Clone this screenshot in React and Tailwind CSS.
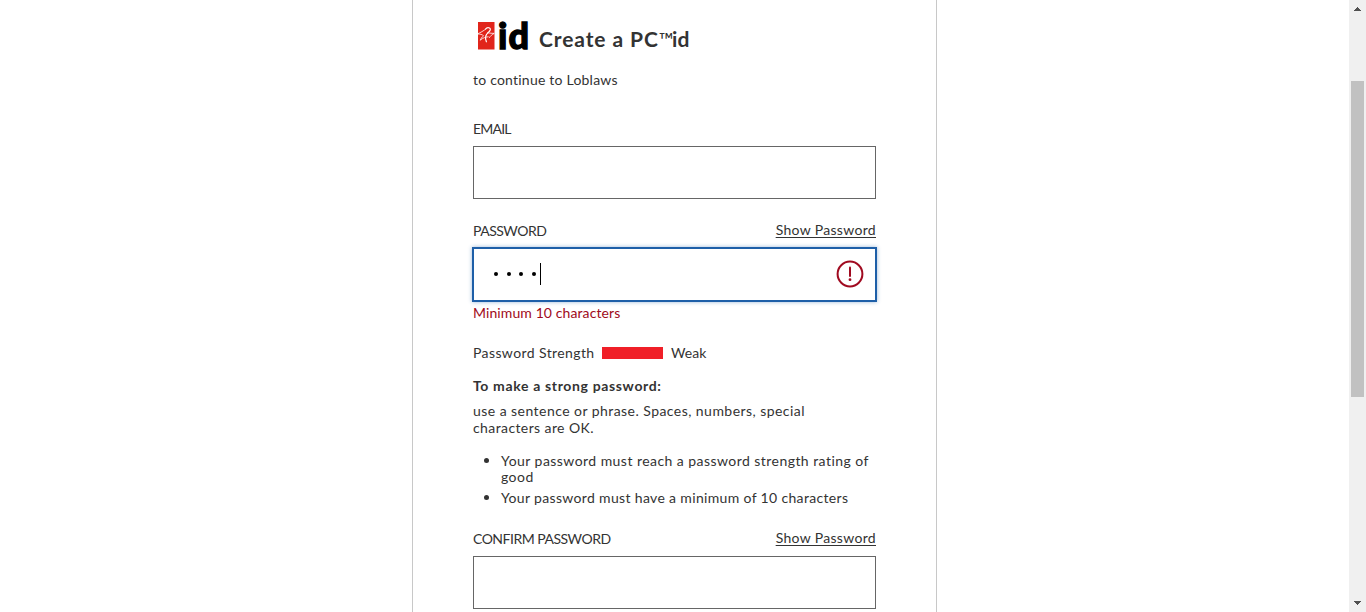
function Logo() {
  return (
    <div className="flex h-8 w-[53px] shrink-0 items-start">
      <svg className="mt-0.5 h-7 w-[19px] shrink-0" viewBox="0 0 19 28">
        <rect x="1" y="0" width="16.5" height="27.5" fill="#e1251b" />
        <path d="M8.7 7C10 5 14 5.4 13.2 8C12.5 10 9.6 11.2 8.8 14C8.3 16 8.7 18 9.4 19.8" fill="none" stroke="#fff" strokeWidth="1.2" strokeLinecap="round" />
        <path d="M9 6.8C6.5 9 3.5 10.5 0.3 12C3.5 12 5 12.4 6.5 13.8C4.8 15.2 3.8 16.8 3.2 18.2C6.5 15.6 8.5 15 11.2 14.8M10.6 10.8C13 11.2 15.3 11.4 17.2 11.4C15 12.6 13.5 13.8 12.4 15.6" fill="none" stroke="#fff" strokeWidth="0.8" strokeLinecap="round" />
      </svg>
      <span className="ml-[2px] font-['Lato',sans-serif] text-[36px] leading-[30px] font-black tracking-[1.2px] text-black [-webkit-text-stroke:1.3px_#000]">id</span>
    </div>
  );
}

function Label({ children, className, link }) {
  return (
    <div className="flex h-5 items-start justify-between">
      <label className={"pt-px text-[14px] leading-5 " + className}>{children}</label>
      {link && <a className="text-[14px] leading-5 tracking-[0.32px] underline underline-offset-2">Show Password</a>}
    </div>
  );
}

function Scrollbar() {
  return (
    <div className="flex h-full w-[17px] shrink-0 flex-col items-center bg-[#f0f0f0]">
      <svg className="h-[17px] w-[17px]" viewBox="0 0 17 17" shapeRendering="crispEdges">
        <path d="M8 7h1v1h1v1h1v1h1v1H5v-1h1V9h1V8h1z" fill="#505050" />
      </svg>
      <div className="mt-16 h-[316px] w-[13px] bg-[#c1c1c1]" />
      <div className="grow" />
      <svg className="h-[17px] w-[17px]" viewBox="0 0 17 17" shapeRendering="crispEdges">
        <path d="M5 6h7v1h-1v1h-1v1H9v1H8V9H7V8H6V7H5z" fill="#505050" />
      </svg>
    </div>
  );
}

export default function App() {
  return (
    <div className="flex h-[612px] w-[1366px] overflow-hidden bg-white font-['Lato',sans-serif] text-[#333]">
      <div className="flex min-w-0 grow justify-center">
        <main className="h-[660px] w-[525px] shrink-0 border-x border-[#c8c8c8] px-[60px] pt-5">
          <header className="flex h-8 items-start pl-1">
            <Logo />
            <h1 className="ml-[9px] pt-1 text-[21px] leading-[30px] font-bold tracking-[0.9px] whitespace-nowrap">Create a PC<span className="text-[20px] font-normal tracking-[-1.8px]">™</span><span className="tracking-[0.2px]">id</span></h1>
          </header>
          <p className="mt-[18px] text-[14px] leading-5 tracking-[0.22px]">to continue to Loblaws</p>
          <div className="mt-[28px]"><Label className="tracking-[-0.8px]">EMAIL</Label></div>
          <div className="mt-[8px] h-[53px] border border-[#666]" />
          <div className="mt-[21px]"><Label link className="tracking-[-0.5px]">PASSWORD</Label></div>
          <div className="-mx-px mt-[7px] flex h-[55px] items-center border-2 border-[#1e5fa8] pr-[11px] pb-px pl-5 shadow-[0_0_4px_rgba(30,95,168,0.45)]">
            <div className="flex grow items-center">
              <div className="flex items-center gap-[8.7px]">
                <i className="h-1 w-1 rounded-full bg-black" /><i className="h-1 w-1 rounded-full bg-black" /><i className="h-1 w-1 rounded-full bg-black" /><i className="h-1 w-1 rounded-full bg-black" />
              </div>
              <div className="ml-[3.5px] h-[22px] w-px bg-black" />
            </div>
            <svg className="h-7 w-7" viewBox="0 0 28 28" fill="none">
              <circle cx="14" cy="14" r="12.4" stroke="#a00a20" strokeWidth="2" />
              <path d="M14 7.5v8.5" stroke="#a00a20" strokeWidth="2" strokeLinecap="round" />
              <circle cx="14" cy="19.7" r="1.4" fill="#a00a20" />
            </svg>
          </div>
          <p className="mt-px text-[14px] leading-5 tracking-[0.1px] text-[#a00a20]">Minimum 10 characters</p>
          <div className="mt-5 flex h-5 items-center text-[14px] leading-5 tracking-[0.4px]">
            <span className="w-[129px]">Password Strength</span>
            <span className="h-3 w-[61px] bg-[#f01f28]" />
            <span className="ml-2 tracking-[0.1px]">Weak</span>
          </div>
          <p className="mt-[13px] text-[14px] leading-5 font-bold tracking-[0.65px]">To make a strong password:</p>
          <p className="mt-[6px] text-[14px] leading-[17px] tracking-[0.45px] whitespace-nowrap">use a sentence or phrase. Spaces, numbers, special<br /><span className="tracking-[0.4px]">characters are OK.</span></p>
          <ul className="mt-[17px] text-[14px] leading-4 tracking-[0.45px] whitespace-nowrap">
            <li className="flex"><i className="mt-[5px] mr-3 ml-[11px] h-[5px] w-[5px] rounded-full bg-[#333]" /><span>Your password must reach a password strength rating of<br />good</span></li>
            <li className="mt-[5px] flex tracking-[0.34px]"><i className="mt-[5px] mr-3 ml-[11px] h-[5px] w-[5px] rounded-full bg-[#333]" /><span>Your password must have a minimum of 10 characters</span></li>
          </ul>
          <div className="mt-[22px]"><Label link className="tracking-[-0.5px]">CONFIRM PASSWORD</Label></div>
          <div className="mt-2 h-[53px] border border-[#666]" />
        </main>
      </div>
      <Scrollbar />
    </div>
  );
}
